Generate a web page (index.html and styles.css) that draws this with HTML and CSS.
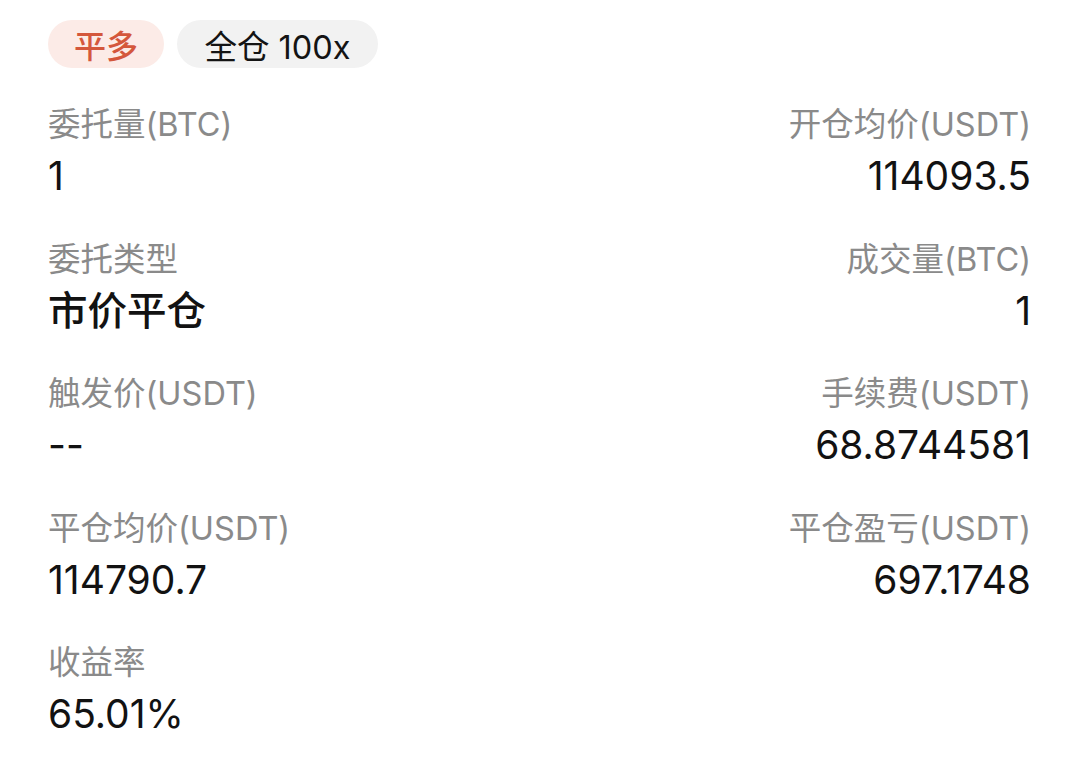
FILE: index.html
```html
<!DOCTYPE html>
<html lang="zh-CN">
<head>
<meta charset="utf-8">
<link rel="stylesheet" href="styles.css">
</head>
<body>
<div class="page">
  <div class="tags">
    <span class="tag tag-close">平多</span>
    <span class="tag tag-mode">全仓 100x</span>
  </div>
  <div class="grid">
    <div class="cell">
      <div class="label">委托量(BTC)</div>
      <div class="value">1</div>
    </div>
    <div class="cell right">
      <div class="label">开仓均价(USDT)</div>
      <div class="value">114093.5</div>
    </div>
    <div class="cell">
      <div class="label">委托类型</div>
      <div class="value cjk">市价平仓</div>
    </div>
    <div class="cell right">
      <div class="label">成交量(BTC)</div>
      <div class="value">1</div>
    </div>
    <div class="cell">
      <div class="label">触发价(USDT)</div>
      <div class="value">--</div>
    </div>
    <div class="cell right">
      <div class="label">手续费(USDT)</div>
      <div class="value">68.8744581</div>
    </div>
    <div class="cell">
      <div class="label">平仓均价(USDT)</div>
      <div class="value">114790.7</div>
    </div>
    <div class="cell right">
      <div class="label">平仓盈亏(USDT)</div>
      <div class="value">697.1748</div>
    </div>
    <div class="cell">
      <div class="label">收益率</div>
      <div class="value">65.01%</div>
    </div>
  </div>
</div>
</body>
</html>
```

FILE: styles.css
```css
html, body {
  margin: 0;
  padding: 0;
  background: #ffffff;
}

body {
  font-family: Inter, "Noto Sans CJK SC", sans-serif;
  color: #121212;
}

.page {
  width: 1080px;
  height: 765px;
  box-sizing: border-box;
  padding: 20px 49px 0 48px;
  overflow: hidden;
}

.tags {
  display: flex;
  gap: 13px;
  height: 48px;
}

.tag {
  display: inline-flex;
  align-items: center;
  justify-content: center;
  height: 48px;
  border-radius: 24px;
  font-size: 32px;
  box-sizing: border-box;
  white-space: nowrap;
}

.tag-close {
  background: #fcebe7;
  color: #d4573c;
  width: 116px;
  font-weight: 500;
}

.tag-mode {
  background: #f2f2f2;
  color: #141414;
  width: 201px;
  font-size: 32.5px;
}

.grid {
  margin-top: 37px;
  display: grid;
  grid-template-columns: 1fr 1fr;
  row-gap: 38.5px;
}

.cell {
  display: flex;
  flex-direction: column;
  gap: 6px;
  align-items: flex-start;
}

.cell.right {
  align-items: flex-end;
}

.label {
  font-size: 32.5px;
  line-height: 40px;
  color: #8a8a8a;
  height: 40px;
  white-space: nowrap;
}

.value {
  font-size: 39px;
  line-height: 50px;
  height: 50px;
  color: #121212;
  white-space: nowrap;
}

.value.cjk {
  font-size: 39.5px;
  font-weight: 500;
}
```
